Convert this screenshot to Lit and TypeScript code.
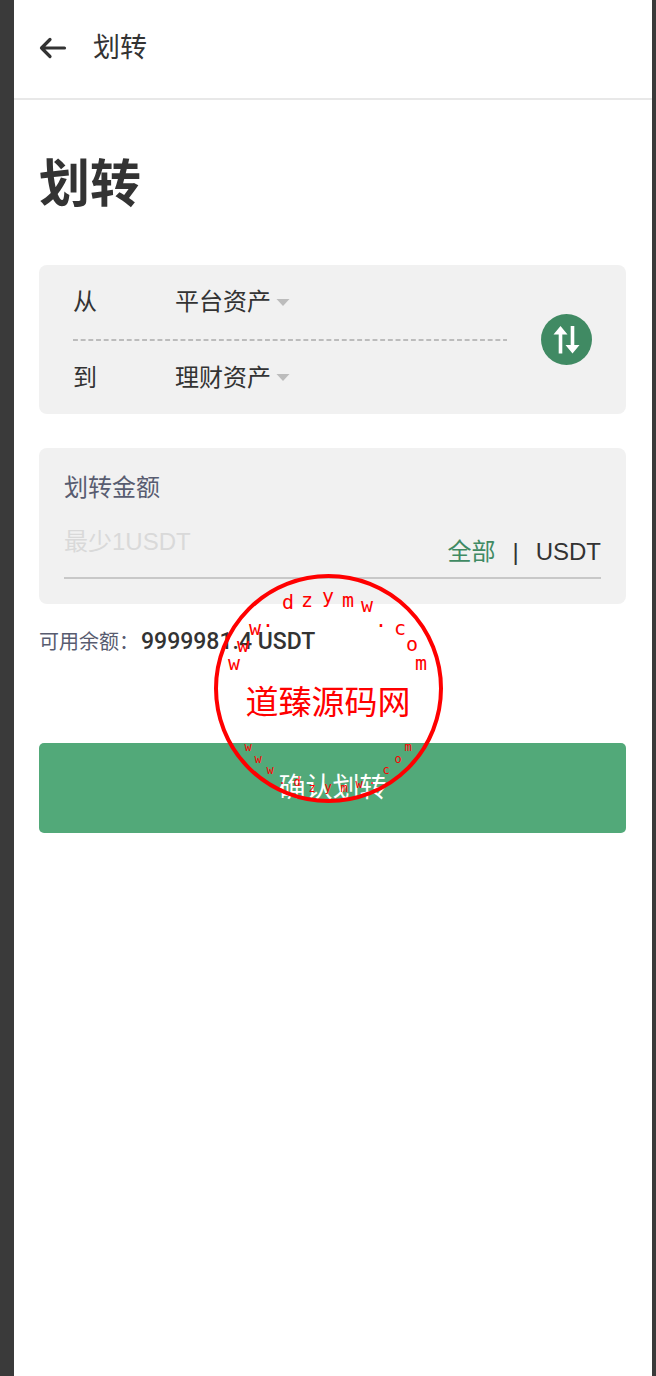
import { LitElement, html, css, svg } from "lit";
import { customElement, state } from "lit/decorators.js";

type Glyph = [string, number, number];

const UPPER_ARC: Glyph[] = [
  ["w", 20, 96], ["w", 29, 78], ["w", 41, 61], [".", 54, 53],
  ["d", 74, 35], ["z", 93, 33], ["y", 114, 29], ["m", 134, 33],
  ["w", 153, 38], [".", 167, 53], ["c", 186, 61], ["o", 198, 77], ["m", 207, 96],
];

const LOWER_ARC: Glyph[] = [
  ["w", 34, 177], ["w", 44, 189], ["w", 56, 200], [".", 68, 210],
  ["d", 83, 212], ["z", 98, 218], ["y", 114, 217], ["m", 130, 218],
  ["w", 145, 214], [".", 158, 210], ["c", 172, 200], ["o", 184, 189], ["m", 194, 177],
];

@customElement("site-stamp")
export class SiteStamp extends LitElement {
  static styles = css`
    :host { display: block; }
    .seal { display: block; width: 230px; height: 230px; }
    .ring { fill: none; stroke: #f00; stroke-width: 4; }
    .name, .upper, .lower { fill: #f00; text-anchor: middle; }
    .name { font: 33px "Noto Sans CJK SC", sans-serif; }
    .upper { font: 20px "DejaVu Sans Mono", monospace; }
    .lower { font: 12px "DejaVu Sans Mono", monospace; }
  `;

  render() {
    return html`
      <svg class="seal" viewBox="0 0 230 230" aria-hidden="true">
        <circle class="ring" cx="114.500" cy="114.500" r="112.500"></circle>
        ${UPPER_ARC.map(([c, x, y]) => svg`<text class="upper" x=${x} y=${y}>${c}</text>`)}
        <text class="name" x="114" y="140">道臻源码网</text>
        ${LOWER_ARC.map(([c, x, y]) => svg`<text class="lower" x=${x} y=${y}>${c}</text>`)}
      </svg>
    `;
  }
}

@customElement("app-root")
export class AppRoot extends LitElement {
  static styles = css`
    :host {
      display: block;
      box-sizing: border-box;
      min-height: 100vh;
      padding: 0 4px 0 14px;
      background: #3a3a3a;
      color: #333;
      font-family: "Liberation Sans", "Noto Sans CJK SC", sans-serif;
      font-size: 24px;
      line-height: 36px;
    }
    * { box-sizing: border-box; }
    button, select, input {
      margin: 0;
      padding: 0;
      border: 0;
      background: none;
      color: inherit;
      font: inherit;
    }
    button, select { cursor: pointer; }
    svg { display: block; }
    .screen { min-height: 100vh; background: #fff; }
    .bar {
      display: flex;
      align-items: center;
      gap: 26px;
      height: 100px;
      padding: 0 26px 2px 25px;
      border-bottom: 2px solid #e8e8e8;
      font-size: 27px;
    }
    .content { padding: 48px 26px 48px 25px; }
    .title { margin: 0 0 43px; font-size: 51px; line-height: 74px; font-weight: 700; }
    .card { border-radius: 8px; background: #f1f1f1; }
    .route { display: flex; align-items: center; gap: 34px; padding: 0 34px; }
    .accounts { flex: 1; }
    .account { display: flex; align-items: center; height: 74px; }
    .account:last-child { height: 73px; }
    .account-label { width: 102px; }
    .picker { position: relative; display: flex; align-items: center; }
    .picker select { appearance: none; height: 36px; padding-right: 22px; outline: none; }
    .caret { position: absolute; right: 3px; pointer-events: none; }
    .divider { display: block; width: 100%; height: 2px; }
    .swap { width: 51px; height: 51px; border-radius: 50%; }
    .amount { margin-top: 34px; padding: 22px 25px 25px; }
    .amount-label { display: block; color: #585c70; }
    .entry {
      display: flex;
      justify-content: space-between;
      height: 73px;
      border-bottom: 2px solid #c8c8c8;
    }
    .entry input { flex: 1; min-width: 0; height: 36px; margin-top: 18px; outline: none; }
    .entry input::placeholder { color: #d9d9d9; opacity: 1; }
    .unit { display: flex; align-items: center; gap: 17px; height: 36px; margin-top: 28px; }
    .all { color: #408a63; }
    .balance { display: flex; align-items: center; gap: 2px; margin: 20px 0 0; color: #585c70; font-size: 20px; }
    .balance strong { color: #333; font-family: Roboto, sans-serif; font-size: 23px; font-weight: 500; }
    .confirm-area { position: relative; margin-top: 83px; }
    .confirm {
      display: block;
      width: 100%;
      height: 90px;
      border-radius: 5px;
      background: #52a979;
      color: #fff;
      font-size: 27px;
    }
    site-stamp {
      position: absolute;
      left: 50%;
      bottom: 29px;
      margin-left: -119px;
      pointer-events: none;
    }
  `;

  @state() private source = "平台资产";
  @state() private target = "理财资产";
  @state() private amount = "";

  private accounts = ["平台资产", "理财资产"];

  private swap() {
    [this.source, this.target] = [this.target, this.source];
  }

  private picker(id: string, value: string, onChange: (v: string) => void) {
    return html`
      <span class="picker">
        <select id=${id} @change=${(e: Event) => onChange((e.target as HTMLSelectElement).value)}>
          ${this.accounts.map((a) => html`<option value=${a} ?selected=${a === value}>${a}</option>`)}
        </select>
        <svg class="caret" width="14" height="7" viewBox="0 0 14 7" aria-hidden="true">
          <path d="M0.500 0H13.500L7 7Z" fill="#bcbcbc"></path>
        </svg>
      </span>
    `;
  }

  render() {
    return html`
      <div class="screen">
        <header class="bar">
          <button type="button" aria-label="返回">
            <svg width="28" height="22" viewBox="0 0 28 22" fill="none" stroke="#333" stroke-width="3.200" stroke-linecap="round" stroke-linejoin="round">
              <path d="M25.500 11H2.500M11 2.500L2.500 11L11 19.500"></path>
            </svg>
          </button>
          <span>划转</span>
        </header>
        <main class="content">
          <h1 class="title">划转</h1>
          <section class="card route">
            <div class="accounts">
              <div class="account">
                <label class="account-label" for="source">从</label>
                ${this.picker("source", this.source, (v) => (this.source = v))}
              </div>
              <svg class="divider" aria-hidden="true">
                <line x1="0" y1="1" x2="100%" y2="1" stroke="#bcbcbc" stroke-width="2" stroke-dasharray="4.900 2.780"></line>
              </svg>
              <div class="account">
                <label class="account-label" for="target">到</label>
                ${this.picker("target", this.target, (v) => (this.target = v))}
              </div>
            </div>
            <button class="swap" type="button" aria-label="交换" @click=${this.swap}>
              <svg width="51" height="51" viewBox="0 0 51 51">
                <circle cx="25.500" cy="25.500" r="25.500" fill="#408a63"></circle>
                <path fill="#fff" d="M19.500 12L26.500 20.500H21.300V39.500H17.700V20.500H12.500ZM29.700 12H33.300V31H38.500L31.500 39.500L24.500 31H29.700Z"></path>
              </svg>
            </button>
          </section>
          <section class="card amount">
            <label class="amount-label" for="amount">划转金额</label>
            <div class="entry">
              <input id="amount" inputmode="decimal" placeholder="最少1USDT" .value=${this.amount}
                @input=${(e: Event) => (this.amount = (e.target as HTMLInputElement).value)} />
              <div class="unit">
                <button class="all" type="button" @click=${() => (this.amount = "9999981.4")}>全部</button>
                <span>|</span>
                <span>USDT</span>
              </div>
            </div>
          </section>
          <p class="balance"><span>可用余额：</span><strong>9999981.4 USDT</strong></p>
          <div class="confirm-area">
            <button class="confirm" type="button">确认划转</button>
            <site-stamp></site-stamp>
          </div>
        </main>
      </div>
    `;
  }
}
